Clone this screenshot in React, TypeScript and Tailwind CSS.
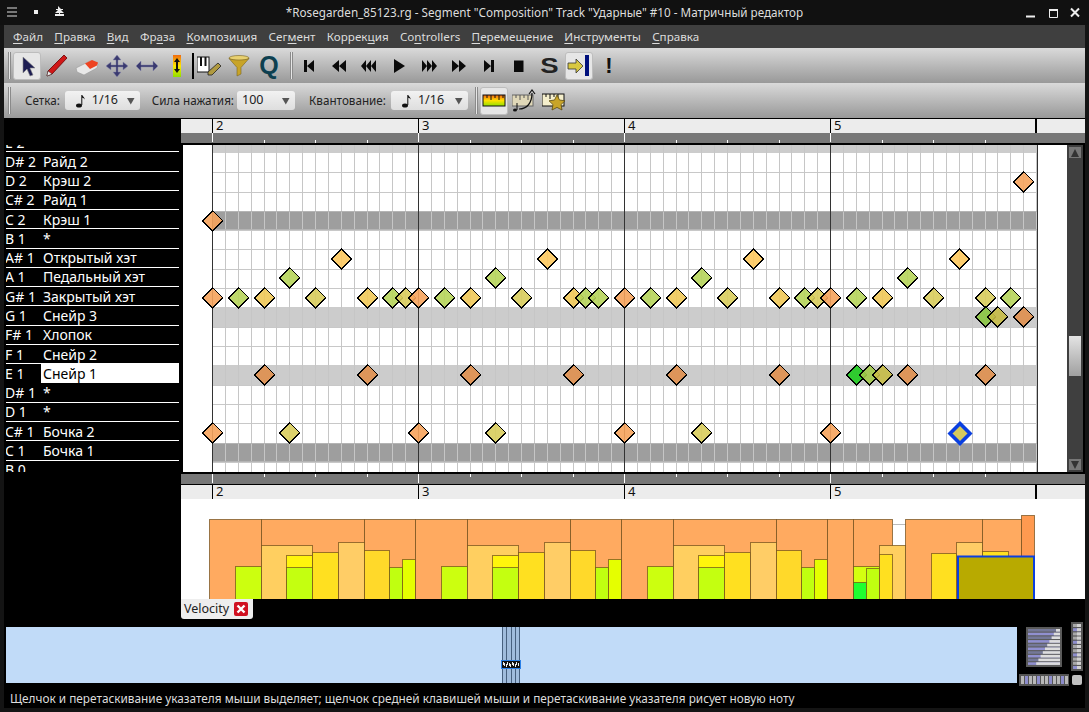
import React from "react";

const FONT = "font-['Noto_Sans','Open_Sans',sans-serif]";

const KEYS: [string, string][] = [
  ["E 2", ""],
  ["D# 2", "Райд 2"],
  ["D 2", "Крэш 2"],
  ["C# 2", "Райд 1"],
  ["C 2", "Крэш 1"],
  ["B 1", "*"],
  ["A# 1", "Открытый хэт"],
  ["A 1", "Педальный хэт"],
  ["G# 1", "Закрытый хэт"],
  ["G 1", "Снейр 3"],
  ["F# 1", "Хлопок"],
  ["F 1", "Снейр 2"],
  ["E 1", "Снейр 1"],
  ["D# 1", "*"],
  ["D 1", "*"],
  ["C# 1", "Бочка 2"],
  ["C 1", "Бочка 1"],
  ["B 0", ""],
];

const ORANGE = "#f5a35c";
const DARK = "#df8f4e";
const YELLOW = "#fcc85e";
const GOLD = "#f0c858";
const GREEN = "#b6d45a";
const OLIVE = "#d8cc5c";
const KHAKI = "#c6bb46";
const LIME = "#88c440";
const MID = "#a2c94a";
const VIVID = "#1ecb1e";

// column (1/16 steps from bar 2), row centre y, colour
const NOTES: [number, number, string][] = [
  [63, 182, ORANGE],
  [0, 221, ORANGE],
  [10, 259, YELLOW], [26, 259, YELLOW], [42, 259, YELLOW], [58, 259, YELLOW],
  [6, 278, GREEN], [22, 278, GREEN], [38, 278, GREEN], [54, 278, GREEN],
  [0, 298, ORANGE], [2, 298, GREEN], [4, 298, GOLD], [8, 298, OLIVE], [12, 298, GOLD], [14, 298, GREEN], [15, 298, OLIVE],
  [16, 298, ORANGE], [18, 298, GREEN], [20, 298, GOLD], [24, 298, OLIVE], [28, 298, GOLD], [29, 298, GREEN], [30, 298, GREEN],
  [32, 298, ORANGE], [34, 298, GREEN], [36, 298, GOLD], [40, 298, OLIVE], [44, 298, GOLD], [46, 298, GREEN], [47, 298, OLIVE],
  [48, 298, ORANGE], [50, 298, GREEN], [52, 298, GOLD], [56, 298, OLIVE], [60, 298, OLIVE], [62, 298, GREEN],
  [60, 317, LIME], [61, 317, KHAKI], [63, 317, DARK],
  [4, 375, DARK], [12, 375, DARK], [20, 375, DARK], [28, 375, DARK], [36, 375, DARK], [44, 375, DARK],
  [50, 375, VIVID], [51, 375, MID], [52, 375, KHAKI], [54, 375, DARK], [60, 375, DARK],
  [0, 433, ORANGE], [6, 433, OLIVE], [16, 433, ORANGE], [22, 433, OLIVE], [32, 433, ORANGE], [38, 433, OLIVE], [48, 433, ORANGE],
];

const ROW_LINES = [172, 192, 211, 230, 249, 269, 288, 307, 327, 346, 365, 385, 404, 423, 443, 462];
const BANDS: [number, number, string][] = [
  [145, 153, "#cccccc"],
  [211, 230, "#9e9e9e"],
  [307, 327, "#cccccc"],
  [365, 385, "#cccccc"],
  [443, 462, "#9e9e9e"],
];
const colX = (k: number) => Math.round(212 + 12.875 * k);

function MatrixGrid() {
  const cols = Array.from({ length: 65 }, (_, k) => k);
  return (
    <svg width={884} height={327} viewBox="183 145 884 327" className="block shrink-0 bg-white">
      {ROW_LINES.map((y) => (
        <rect key={y} x={212} y={y} width={825} height={1} fill="#c8c8c8" />
      ))}
      {BANDS.map(([a, b, c]) => (
        <rect key={a} x={212} y={a} width={825} height={b - a} fill={c} />
      ))}
      {cols.map((k) => (
        <rect key={k} x={colX(k)} y={145} width={1} height={327} fill="#c6c6c6" />
      ))}
      {BANDS.filter((b) => b[2] === "#9e9e9e").map(([a, b]) => (
        <g key={a}>
          <rect x={212} y={a} width={825} height={1} fill="#b4b4b4" />
          <rect x={212} y={b - 1} width={825} height={1} fill="#b4b4b4" />
        </g>
      ))}
      {[212, 418, 624, 830, 1037].map((x) => (
        <rect key={x} x={x} y={145} width={1} height={327} fill="#333333" />
      ))}
      {NOTES.map(([k, y, c], i) => {
        const x = colX(k) + 0.7;
        return (
          <polygon
            key={i}
            points={`${x - 10},${y} ${x},${y - 10} ${x + 10},${y} ${x},${y + 10}`}
            fill={c}
            fillOpacity={0.9}
            stroke="#000"
            strokeWidth={1}
            shapeRendering="crispEdges"
          />
        );
      })}
      <polygon points="950,433.5 960,423.5 970,433.5 960,443.5" fill="#d6ca5c" stroke="#0a3fe0" strokeWidth={3.6} />
    </svg>
  );
}

function Ruler() {
  const ticks: number[] = [];
  for (let i = 0; i < 4; i++) [51.5, 103, 154.5].forEach((d) => ticks.push(Math.round(212 + i * 206 + d)));
  return (
    <svg width={904} height={27} viewBox="181 118 904 27" className="block shrink-0">
      <rect x={181} y={118} width={904} height={15} fill="#ececec" />
      <rect x={181} y={118} width={904} height={1} fill="#000" />
      <rect x={181} y={133} width={904} height={10} fill="#777777" />
      <rect x={181} y={143} width={904} height={2} fill="#000" />
      {[2, 3, 4, 5].map((n, i) => (
        <g key={n}>
          <rect x={212 + i * 206} y={118} width={1} height={15} fill="#000" />
          <rect x={212 + i * 206} y={133} width={1} height={9} fill="#fff" />
          <text x={216 + i * 206} y={130} fontSize={13} fill="#111" fontFamily="Noto Sans">
            {n}
          </text>
        </g>
      ))}
      <rect x={1035} y={118} width={2} height={15} fill="#000" />
      {ticks.map((x) => (
        <rect key={x} x={x} y={140} width={1} height={3} fill="#fff" />
      ))}
    </svg>
  );
}

const P: [number, number, number, string][] = [
  [0, 52, 519, "#ffaa60"],
  [52, 103, 519, "#ffaa60"],
  [155, 51, 519, "#ffaa60"],
  [26, 26, 566, "#ccff0f"],
  [52, 51, 545, "#ffcf60"],
  [77, 26, 555, "#fff50c"],
  [77, 26, 567, "#c4ff10"],
  [103, 26, 552, "#ffe020"],
  [129, 26, 542, "#ffcd66"],
  [155, 25, 550, "#ffd92a"],
  [180, 13, 567, "#c0ff10"],
  [193, 13, 559, "#e5ff00"],
];
const LAST: [number, number, number, string][] = [
  [828, 26, 519, "#ffaa60"],
  [854, 39, 519, "#ffaa60"],
  [906, 77, 519, "#ffaa60"],
  [983, 39, 519, "#ffaa60"],
  [1022, 13, 515, "#ff9a50"],
  [880, 26, 545, "#ffcf60"],
  [854, 26, 566, "#d4ff10"],
  [854, 13, 582, "#20ff30"],
  [867, 13, 568, "#c0ff10"],
  [880, 13, 554, "#ffe020"],
  [932, 25, 553, "#ffe020"],
  [957, 26, 542, "#ffcd66"],
  [983, 26, 551, "#ffe020"],
];

function VelocityChart() {
  const bars = [210, 416, 622].flatMap((s) => P.map(([o, w, t, c]) => [s + o, w, t, c] as [number, number, number, string]));
  return (
    <svg width={904} height={100} viewBox="181 499 904 100" className="block shrink-0 bg-white">
      <rect x={893} y={524} width={13} height={1} fill="#bbbbbb" />
      {[...bars, ...LAST].map(([x, w, t, c], i) => (
        <rect key={i} x={x - 0.5} y={t + 0.5} width={w} height={120} fill={c} stroke="#6e4c18" strokeOpacity={0.7} />
      ))}
      <rect x={958} y={556.5} width={76} height={60} fill="#b8aa00" stroke="#0a3fe0" strokeWidth={2} />
    </svg>
  );
}

function Handle() {
  return <div className="h-[27px] w-[3px] shrink-0 border-x border-x-[#8a8a8a] bg-[#e6e6e6]" />;
}

function Btn({ children, on }: { children: React.ReactNode; on?: boolean }) {
  return (
    <div className="flex h-[28px] w-[30px] shrink-0 items-center justify-center">
      <div
        className={`flex h-[28px] w-[28px] items-center justify-center rounded-[3px] ${
          on ? "border border-[#bdbdbd] bg-[#e6e6e6]" : ""
        }`}
      >
        {children}
      </div>
    </div>
  );
}

function Ico({ children }: { children: React.ReactNode }) {
  return (
    <svg width={24} height={24} viewBox="0 0 24 24" className="block">
      {children}
    </svg>
  );
}

const Black = ({ d }: { d: string }) => (
  <Ico>
    <path d={d} fill="#0a0a0a" />
  </Ico>
);

function Combo({ width, note, text }: { width: string; note?: boolean; text: string }) {
  return (
    <div
      className={`flex h-[19px] items-center rounded-[3px] bg-gradient-to-b from-[#f2f2f2] to-[#dedede] ${width}`}
    >
      {note ? (
        <svg width={12} height={14} viewBox="0 0 12 14" className="ml-[10px] shrink-0">
          <ellipse cx={4} cy={11.5} rx={3} ry={2} fill="#111" />
          <path d="M6.3 11V1h1c.4 1.6 2.6 2 2.2 4.6-.4-1-1-1.6-2.2-1.8V11z" fill="#111" />
        </svg>
      ) : null}
      <span className="ml-[5px] text-[12.5px] text-[#222]">{text}</span>
      <svg width={8} height={8} viewBox="0 0 8 8" className="ml-auto mr-[5px] shrink-0">
        <path d="M0 1h7.5L3.8 7.5z" fill="#555" />
      </svg>
    </div>
  );
}

function Menu({ pre, u, post }: { pre: string; u: string; post: string }) {
  return (
    <span className="whitespace-nowrap">
      {pre}
      <span className="underline underline-offset-2">{u}</span>
      {post}
    </span>
  );
}

function BigWheel() {
  const rows = [0, 1, 2, 3, 4, 5, 6, 7, 8, 9];
  return (
    <svg width={36} height={40} viewBox="0 0 36 40" className="block">
      <rect width={36} height={40} fill="#5a5a5a" />
      {rows.map((i) => (
        <g key={i}>
          <rect x={2} y={2 + i * 3.7} width={32} height={2.6} fill={i % 2 ? "#9090d0" : "#747898"} />
          <rect x={30 - i * 2.2} y={2 + i * 3.7} width={4 + i * 2.2} height={2.6} fill="#dddddd" />
        </g>
      ))}
    </svg>
  );
}

function VertWheel() {
  return (
    <svg width={12} height={49} viewBox="0 0 12 49" className="block">
      <rect width={12} height={49} fill="#555" />
      {Array.from({ length: 11 }, (_, i) => (
        <g key={i}>
          <rect x={2} y={2 + i * 4.2} width={8} height={3} fill={i % 3 === 1 ? "#8e8ecc" : "#a8a8a8"} />
          <rect x={6} y={2 + i * 4.2} width={4} height={3} fill="#d0d0d0" />
        </g>
      ))}
    </svg>
  );
}

function HorizWheel() {
  return (
    <svg width={50} height={12} viewBox="0 0 50 12" className="block">
      <rect width={50} height={12} fill="#555" />
      {Array.from({ length: 12 }, (_, i) => (
        <rect key={i} x={2 + i * 4} y={2} width={3} height={8} fill={i % 3 === 1 ? "#8e8ecc" : "#b8b8b8"} />
      ))}
    </svg>
  );
}

export default function App() {
  return (
    <div className={`flex h-[712px] w-[1089px] flex-col overflow-hidden bg-[#141414] ${FONT}`}>
      {/* Title bar */}
      <div className="relative flex h-[25px] shrink-0 items-center justify-center bg-[#111111] text-[11.7px] text-[#dddddd]">
        <svg width={70} height={14} viewBox="0 0 70 14" className="absolute left-[5px] top-[5px]">
          <path d="M2 2.5h10v1H2zM2 6.5h10v1H2zM2 10.5h10v1H2z" fill="#ddd" />
          <rect x={29} y={5} width={4} height={4} fill="#eee" />
          <path d="M53 1l3 3h2v1l-2 0 3 3h-4v1h4v2h-9v-2h4V8h-4l3-3h-2V4h2z" fill="#eee" />
        </svg>
        <span className="whitespace-nowrap">*Rosegarden_85123.rg - Segment "Composition" Track "Ударные" #10 - Матричный редактор</span>
        <svg width={60} height={14} viewBox="0 0 60 14" className="absolute right-[5px] top-[6px]">
          <rect x={2} y={9.500} width={9} height={2} fill="#eee" />
          <path d="M25.5 3.500h8v8h-8z" fill="none" stroke="#eee" strokeWidth={1} />
          <rect x={25} y={3} width={9} height={2} fill="#eee" />
          <path d="M47 2.500l8 8M55 2.500l-8 8" stroke="#eee" strokeWidth={2} />
        </svg>
      </div>
      {/* Menu */}
      <div className="mx-[4px] flex h-[23px] shrink-0 items-center gap-[11.3px] bg-[#3f3f3f] pl-[9px] pt-[1px] text-[11.65px] text-[#dcdcdc]">
        <Menu pre="" u="Ф" post="айл" />
        <Menu pre="" u="П" post="равка" />
        <Menu pre="" u="В" post="ид" />
        <Menu pre="Фр" u="а" post="за" />
        <Menu pre="" u="К" post="омпозиция" />
        <Menu pre="Сег" u="м" post="ент" />
        <Menu pre="Коррек" u="ц" post="ия" />
        <Menu pre="Co" u="n" post="trollers" />
        <Menu pre="" u="П" post="еремещение" />
        <Menu pre="" u="И" post="нструменты" />
        <Menu pre="" u="С" post="правка" />
      </div>
      {/* Toolbar 1 */}
      <div className="mx-[4px] flex h-[35px] shrink-0 items-center bg-gradient-to-b from-[#dadada] to-[#999999] pl-[4px]">
        <Handle />
        <div className="w-[1px] shrink-0" />
        <Btn on>
          <Ico>
            <path d="M8 3v16l4-4 3 7 3-1-3-7h5z" fill="#1c1c52" stroke="#8a8a8a" strokeWidth={0.6} />
          </Ico>
        </Btn>
        <Btn>
          <Ico>
            <path d="M19 1l3 3L7 20l-5 2 1-5z" fill="#d01818" stroke="#600" strokeWidth={0.8} />
            <path d="M3 17l4 3-5 2z" fill="#eee" stroke="#333" strokeWidth={0.5} />
          </Ico>
        </Btn>
        <Btn>
          <Ico>
            <path d="M1 14l14-7 8 3-1 4-13 7-7-3z" fill="#e8e8e8" stroke="#999" strokeWidth={0.6} />
            <path d="M10 9.500L17 6l6 2.500-1 3-7 3.500z" fill="#ee4422" />
          </Ico>
        </Btn>
        <Btn>
          <Ico>
            <path d="M12 1l4 5h-3v5h5V8l5 4-5 4v-3h-5v5h3l-4 5-4-5h3v-5H6v3l-5-4 5-4v3h5V6H8z" fill="#3a3a70" stroke="#8888aa" strokeWidth={0.5} />
          </Ico>
        </Btn>
        <Btn>
          <Ico>
            <path d="M1 12l5-5v4h12V7l5 5-5 5v-4H6v4z" fill="#3a3a70" stroke="#8888aa" strokeWidth={0.5} />
          </Ico>
        </Btn>
        <Btn>
          <Ico>
            <defs>
              <linearGradient id="vel" x1="0" y1="0" x2="0" y2="1">
                <stop offset="0" stopColor="#f06a10" />
                <stop offset="0.5" stopColor="#ffe800" />
                <stop offset="1" stopColor="#90e000" />
              </linearGradient>
            </defs>
            <rect x={8} y={1} width={8} height={22} fill="url(#vel)" />
            <path d="M12 4l3 4h-2v7h2l-3 4-3-4h2V8H9z" fill="#111" />
          </Ico>
        </Btn>
        <div className="h-[26px] w-[2px] shrink-0 bg-black" />
        <Btn>
          <Ico>
            <rect x={0} y={3} width={12} height={15} fill="#fff" stroke="#111" />
            <rect x={3} y={3} width={2} height={9} fill="#111" />
            <rect x={7.5} y={3} width={2} height={9} fill="#111" />
            <path d="M11 18l10-9 3 3-9 9h-4z" fill="#b09a40" stroke="#222" strokeWidth={0.8} />
          </Ico>
        </Btn>
        <Btn>
          <Ico>
            <ellipse cx={12} cy={4} rx={10} ry={2.500} fill="#e8d070" stroke="#7a6420" strokeWidth={0.6} />
            <path d="M2 4.500l8 9V22l4-2v-6.500l8-9c-4 2-16 2-20 0z" fill="#c8a428" stroke="#7a6420" strokeWidth={0.6} />
          </Ico>
        </Btn>
        <Btn>
          <span className="font-['Liberation_Sans',sans-serif] text-[25px] font-bold leading-none text-[#0d4050]">Q</span>
        </Btn>
        <div className="w-[6px] shrink-0" />
        <Handle />
        <div className="w-[1px] shrink-0" />
        <Btn><Black d="M7 6h3v12H7zM17 6v12l-7-6z" /></Btn>
        <Btn><Black d="M12 6v12l-7-6zM19 6v12l-7-6z" /></Btn>
        <Btn><Black d="M9 6v12l-5-6zM14 6v12l-5-6zM19 6v12l-5-6z" /></Btn>
        <Btn><Black d="M7 5v14l11-7z" /></Btn>
        <Btn><Black d="M5 6v12l5-6zM10 6v12l5-6zM15 6v12l5-6z" /></Btn>
        <Btn><Black d="M5 6v12l7-6zM12 6v12l7-6z" /></Btn>
        <Btn><Black d="M7 6v12l7-6zM14 6h3v12h-3z" /></Btn>
        <Btn><Black d="M7 6.500h9.500v11.500H7z" /></Btn>
        <Btn>
          <span className="scale-x-125 font-['Liberation_Sans',sans-serif] text-[22px] font-bold leading-none text-[#222]">S</span>
        </Btn>
        <Btn on>
          <Ico>
            <path d="M1 9h8V5l7 7-7 7v-4H1z" fill="#d8c840" stroke="#333" strokeWidth={0.8} />
            <rect x={18} y={1} width={4} height={21} fill="#00107c" />
          </Ico>
        </Btn>
        <Btn>
          <span className="font-['Liberation_Sans',sans-serif] text-[22px] font-bold leading-none text-[#111]">!</span>
        </Btn>
      </div>
      {/* Toolbar 2 */}
      <div className="mx-[4px] flex h-[35px] shrink-0 items-center bg-gradient-to-b from-[#dadada] to-[#999999] pl-[4px] text-[11.7px] text-[#222]">
        <Handle />
        <span className="ml-[14px]">Сетка:</span>
        <div className="ml-[5px]"><Combo width="w-[75px]" note text="1/16" /></div>
        <span className="ml-[12px] whitespace-nowrap">Сила нажатия:</span>
        <div className="ml-[3px]"><Combo width="w-[58px]" text="100" /></div>
        <span className="ml-[14px]">Квантование:</span>
        <div className="ml-[5px]"><Combo width="w-[77px]" note text="1/16" /></div>
        <div className="ml-[7px]"><Handle /></div>
        <div className="ml-[1px]">
          <Btn on>
            <svg width={24} height={14} viewBox="0 0 24 14" className="block">
              <defs>
                <linearGradient id="rg" x1="0" y1="0" x2="0" y2="1">
                  <stop offset="0" stopColor="#f06010" />
                  <stop offset="0.5" stopColor="#ffe000" />
                  <stop offset="1" stopColor="#90e000" />
                </linearGradient>
              </defs>
              <rect x={1} y={1} width={22} height={11} fill="url(#rg)" stroke="#111" />
              <path d="M5 1v3M9 1v5M13 1v3M17 1v5M21 1v3" stroke="#111" />
            </svg>
          </Btn>
        </div>
        <Btn>
          <Ico>
            <rect x={0} y={6} width={21} height={11} fill="#e0d8b8" stroke="#666" />
            <path d="M4 6v3M8 6v5M12 6v3M16 6v5" stroke="#555" />
            <path d="M7 20c8 0 13-6 13-16M17 5l3-4 3 4" fill="none" stroke="#111" strokeWidth={1.2} />
            <ellipse cx={3} cy={21} rx={2} ry={1.500} fill="#111" />
            <path d="M5 21V14" stroke="#111" />
          </Ico>
        </Btn>
        <Btn>
          <Ico>
            <rect x={0} y={5} width={22} height={12} fill="#f5efcc" stroke="#111" />
            <path d="M4 5v3M8 5v5M12 5v3M16 5v5" stroke="#111" />
            <path d="M15 6l2.500 5 5.500.8-4 3.800 1 5.400-5-2.600-5 2.600 1-5.400-4-3.800 5.500-.8z" fill="#c8a428" stroke="#5a4a10" strokeWidth={0.8} />
          </Ico>
        </Btn>
      </div>

      {/* Matrix + rulers */}
      <div className="mx-[4px] flex h-[354px] shrink-0 bg-black">
        <div className="w-[177px] shrink-0 pt-[27px]">
          <div className="h-[327px] overflow-hidden pl-[2px] pr-[2px]">
            <div className="-mt-[12px] flex flex-col">
              {KEYS.map(([note, name]) => {
                const sel = note === "E 1";
                return (
                  <div
                    key={note}
                    className={`flex h-[19.28px] shrink-0 items-center overflow-hidden text-[14px] leading-none text-white ${
                      sel ? "" : "border-b border-b-white"
                    }`}
                  >
                    <span className="-ml-[1px] w-[36px] shrink-0 whitespace-pre pt-[1px]">{note}</span>
                    <span
                      className={`flex h-full flex-1 items-center whitespace-nowrap pl-[2px] pt-[1px] ${
                        sel ? "bg-white text-black" : ""
                      }`}
                    >
                      {name}
                    </span>
                  </div>
                );
              })}
            </div>
          </div>
        </div>
        <div className="flex w-[904px] flex-col">
          <Ruler />
          <div className="flex h-[327px] pl-[2px]">
            <MatrixGrid />
            <div className="relative flex w-[16px] shrink-0 flex-col items-center justify-between bg-[#3f3f3f] py-[2px]">
              <div className="flex h-[11px] w-[12px] items-center justify-center bg-[#777777]">
                <svg width={8} height={8} viewBox="0 0 8 8"><path d="M4 0l4 8H0z" fill="#333" /></svg>
              </div>
              <div className="absolute left-[2px] top-[191px] h-[40px] w-[12px] bg-gradient-to-b from-[#e4e4e4] to-[#a0a0a0]" />
              <div className="flex h-[11px] w-[12px] items-center justify-center bg-[#777777]">
                <svg width={8} height={8} viewBox="0 0 8 8"><path d="M4 8L0 0h8z" fill="#333" /></svg>
              </div>
            </div>
          </div>
        </div>
      </div>
      {/* Velocity ruler + chart */}
      <div className="mx-[4px] flex h-[127px] shrink-0 bg-black">
        <div className="w-[177px] shrink-0" />
        <div className="flex w-[904px] flex-col">
          <svg width={904} height={27} viewBox="181 472 904 27" className="block shrink-0">
            <rect x={181} y={472} width={904} height={2} fill="#000" />
            <rect x={181} y={474} width={904} height={10} fill="#777777" />
            <rect x={181} y={484} width={904} height={15} fill="#ececec" />
            <rect x={181} y={484} width={904} height={1} fill="#000" />
            {[2, 3, 4, 5].map((n, i) => (
              <g key={n}>
                <rect x={212 + i * 206} y={474} width={1} height={9} fill="#fff" />
                <rect x={212 + i * 206} y={484} width={1} height={15} fill="#000" />
                <text x={216 + i * 206} y={496} fontSize={13} fill="#111" fontFamily="Noto Sans">{n}</text>
              </g>
            ))}
            <rect x={1035} y={484} width={2} height={15} fill="#000" />
            {[0, 1, 2, 3].flatMap((i) => [51.5, 103, 154.5].map((d) => (
              <rect key={`${i}-${d}`} x={Math.round(212 + i * 206 + d)} y={474} width={1} height={3} fill="#fff" />
            )))}
          </svg>
          <VelocityChart />
        </div>
      </div>
      {/* Tab row */}
      <div className="mx-[4px] flex h-[28px] shrink-0 items-start bg-black pl-[177px]">
        <div className="flex h-[20px] w-[72px] items-center gap-[5px] rounded-b-[3px] bg-[#eeeeee] pl-[3px] text-[12.5px] text-[#222]">
          Velocity
          <svg width={14} height={14} viewBox="0 0 14 14" className="shrink-0">
            <rect width={14} height={14} rx={2} fill="#d01020" />
            <path d="M3.500 3.500l7 7M10.500 3.500l-7 7" stroke="#fff" strokeWidth={2.4} />
          </svg>
        </div>
      </div>
      {/* Panorama */}
      <div className="mx-[4px] flex h-[56px] shrink-0 bg-black pl-[2px]">
        <div className="flex h-[56px] w-[1011px] shrink-0 justify-center bg-[#c1dbf8] pr-[1px]">
          <svg width={22} height={56} viewBox="0 0 22 56" className="block">
            <rect x={2} y={0} width={18} height={56} fill="#a0bcdc" />
            {[2, 6, 11, 15, 19].map((x) => (
              <rect key={x} x={x} y={0} width={1} height={56} fill="#47607e" />
            ))}
            <rect x={1.5} y={33.5} width={19} height={8} fill="#111" stroke="#2a80e8" />
            {[3, 4, 6, 7, 9, 10, 12, 13, 15, 16, 18].map((x, i) => (
              <rect key={x} x={x} y={35 + (i % 3)} width={1} height={3} fill="#eee" />
            ))}
          </svg>
        </div>
        <div className="relative w-[64px] shrink-0">
          <div className="absolute left-[9px] top-0"><BigWheel /></div>
          <div className="absolute left-[54px] -top-[5px]"><VertWheel /></div>
          <div className="absolute left-[2px] top-[47px]"><HorizWheel /></div>
          <div className="absolute left-[55px] top-[48px] h-[10px] w-[10px] rounded-[2px] bg-[#c0c0c0]" />
        </div>
      </div>
      {/* Status bar */}
      <div className="mx-[4px] flex h-[25px] shrink-0 items-center bg-black pl-[6px] pt-[6px] text-[11.8px] text-[#dddddd]">
        <span className="whitespace-nowrap">Щелчок и перетаскивание указателя мыши выделяет; щелчок средней клавишей мыши и перетаскивание указателя рисует новую ноту</span>
      </div>
    </div>
  );
}
